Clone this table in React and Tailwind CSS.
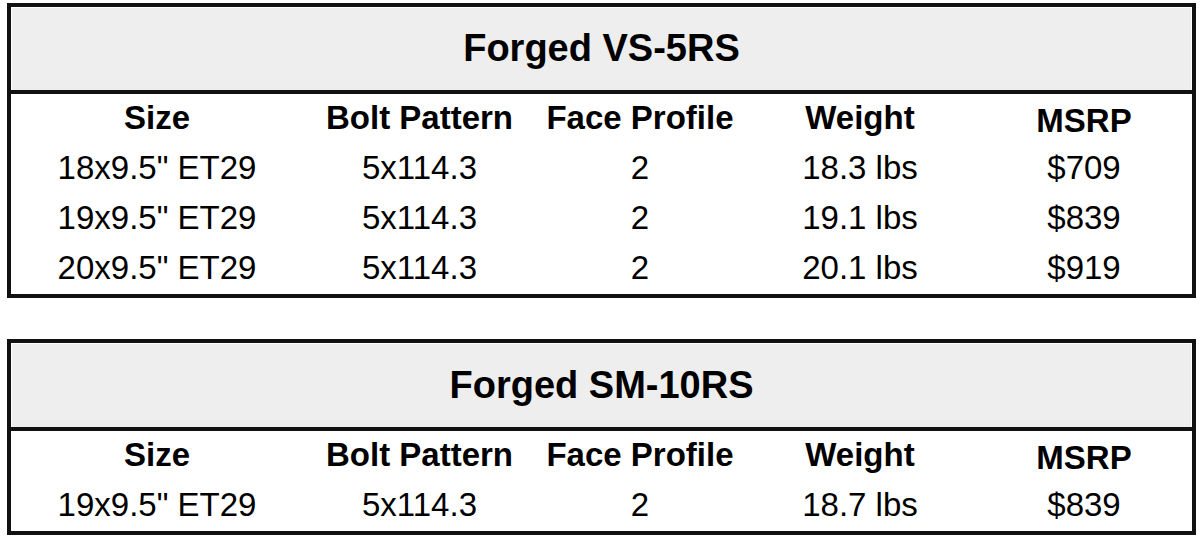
const tables = [
  {
    title: 'Forged VS-5RS',
    headGray: 'h-[82px]',
    bodyH: 'h-[199px]',
    rows: [
      ['18x9.5" ET29', '5x114.3', '2', '18.3 lbs', '$709'],
      ['19x9.5" ET29', '5x114.3', '2', '19.1 lbs', '$839'],
      ['20x9.5" ET29', '5x114.3', '2', '20.1 lbs', '$919'],
    ],
  },
  {
    title: 'Forged SM-10RS',
    headGray: 'h-[83px]',
    bodyH: 'h-[99px]',
    rows: [['19x9.5" ET29', '5x114.3', '2', '18.7 lbs', '$839']],
  },
];

const columns = ['Size', 'Bolt Pattern', 'Face Profile', 'Weight', 'MSRP'];

function SpecTable({ table }) {
  return (
    <div className="w-[1189px] border-[4px] border-[#111] bg-white p-px">
      {/* title band */}
      <div className={`${table.headGray} flex items-center justify-center bg-[#eeeeee] pb-[2px]`}>
        <h2 className="text-[38px] font-bold leading-none text-black">{table.title}</h2>
      </div>
      <div className="-mx-px h-[4px] bg-[#111]" />
      <div className={`${table.bodyH} flex flex-col`}>
        <div className="grid h-[50px] shrink-0 grid-cols-[290px_235px_206px_234px_1fr] items-center">
          {columns.map((c) => (
            <div
              key={c}
              className={`text-center text-[33px] font-bold leading-none ${c === 'MSRP' ? 'pt-[6px] pb-[4px]' : 'pb-[4px]'}`}
            >
              {c}
            </div>
          ))}
        </div>
        {table.rows.map((r, i) => (
          <div key={i} className="grid h-[50px] shrink-0 grid-cols-[290px_235px_206px_234px_1fr] items-center">
            {r.map((v, j) => (
              <div key={j} className="pb-[4px] text-center text-[33px] leading-none">
                {v}
              </div>
            ))}
          </div>
        ))}
      </div>
    </div>
  );
}

export default function App() {
  return (
    <div
      className="h-[537px] w-[1200px] overflow-hidden bg-white pl-[7px] pt-[3px] text-black"
      style={{ fontFamily: '"Liberation Sans", Arial, sans-serif' }}
    >
      <div className="flex flex-col gap-[41px]">
        {tables.map((t) => (
          <SpecTable key={t.title} table={t} />
        ))}
      </div>
    </div>
  );
}
